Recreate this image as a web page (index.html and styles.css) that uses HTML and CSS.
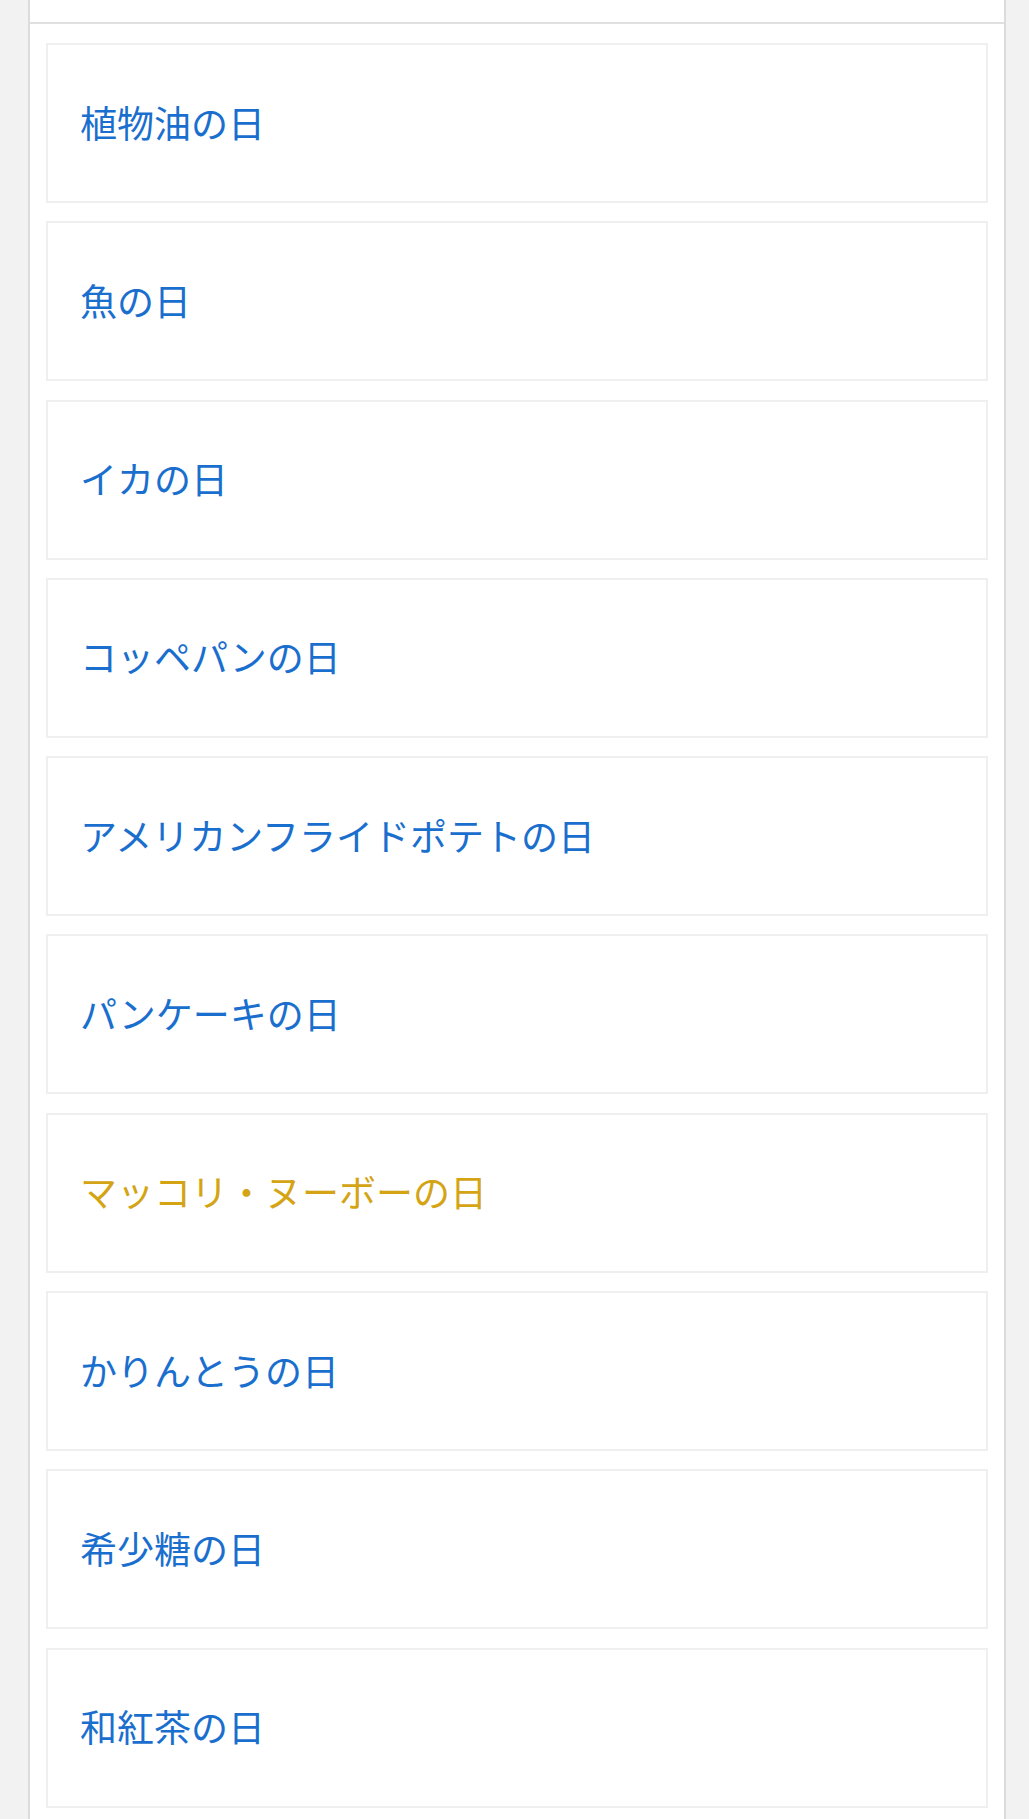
FILE: index.html
```html
<!DOCTYPE html>
<html lang="ja">

<head>
    <meta charset="UTF-8">
    <meta name="viewport" content="width=device-width, initial-scale=1.0">
    <title>今日は何の日</title>
    <link rel="stylesheet" href="styles.css">
</head>

<body>
    <div class="page">
        <div class="page-top"></div>

        <ul class="day-list">
            <li><a href="#">植物油の日</a></li>
            <li><a href="#">魚の日</a></li>
            <li><a href="#">イカの日</a></li>
            <li><a href="#">コッペパンの日</a></li>
            <li><a href="#">アメリカンフライドポテトの日</a></li>
            <li><a href="#">パンケーキの日</a></li>
            <li><a href="#" class="visited">マッコリ・ヌーボーの日</a></li>
            <li><a href="#">かりんとうの日</a></li>
            <li><a href="#">希少糖の日</a></li>
            <li><a href="#">和紅茶の日</a></li>
        </ul>
    </div>
</body>

</html>
```

FILE: styles.css
```css
body {
    font-family: "Noto Sans CJK JP", "Noto Sans", sans-serif;
    margin: 0;
    padding: 0;
    background-color: #f2f2f2;
}

.page {
    margin: 0 23px 0 28px;
    background: white;
    border-left: 2px solid #dcdcdc;
    border-right: 2px solid #dcdcdc;
    min-height: 1819px;
}

.page-top {
    height: 22px;
    border-bottom: 2px solid #e0e0e0;
}

.day-list {
    list-style: none;
    margin: 0;
    padding: 19px 16px 0;
}

.day-list li {
    height: 160px;
    box-sizing: border-box;
    border: 2px solid #efefef;
    margin-bottom: 18.3px;
    display: flex;
    align-items: center;
    padding: 0 32px 2px;
}

.day-list a {
    color: #1a6fce;
    text-decoration: none;
    font-size: 37px;
    line-height: 1;
}

.day-list a.visited {
    color: #d4a414;
}
```
